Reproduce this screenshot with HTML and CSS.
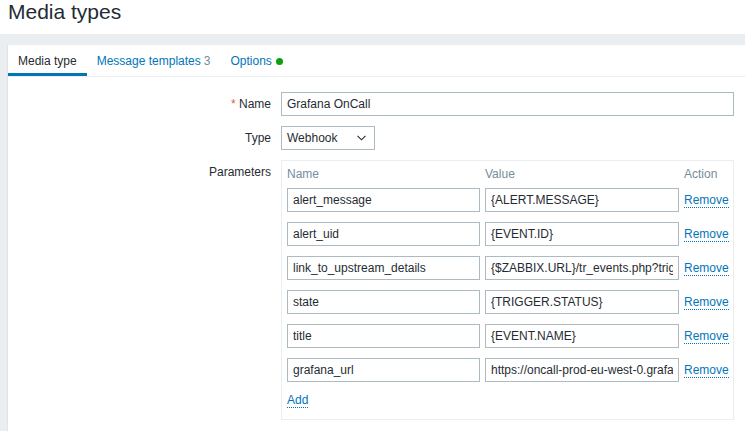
FILE: index.html
```html
<!DOCTYPE html>
<html>
<head>
<meta charset="utf-8">
<title>Media types</title>
<link rel="stylesheet" href="styles.css">
</head>
<body>
<header class="page-header">
  <h1 class="page-title">Media types</h1>
</header>
<main class="content">
  <section class="panel">
    <nav class="tabs">
      <a class="tab tab-active">Media type</a>
      <a class="tab">Message templates<span class="tab-count">3</span></a>
      <a class="tab">Options<span class="tab-dot"></span></a>
    </nav>
    <form class="form">
      <label class="form-label"><span class="req">*</span> Name</label>
      <div class="form-field"><input class="text-input input-wide" type="text" value="Grafana OnCall"></div>

      <label class="form-label">Type</label>
      <div class="form-field">
        <div class="select">
          <span>Webhook</span>
          <svg class="chevron" width="9" height="6" viewBox="0 0 9 6"><path d="M0.5 0.8 L4.5 4.8 L8.5 0.8" fill="none" stroke="#1f2c33" stroke-width="1.1"/></svg>
        </div>
      </div>

      <label class="form-label">Parameters</label>
      <div class="form-field">
        <div class="params">
          <div class="params-grid">
            <div class="th">Name</div>
            <div class="th">Value</div>
            <div class="th">Action</div>

            <input class="text-input" type="text" value="alert_message">
            <input class="text-input" type="text" value="{ALERT.MESSAGE}">
            <div class="action"><a class="link">Remove</a></div>

            <input class="text-input" type="text" value="alert_uid">
            <input class="text-input" type="text" value="{EVENT.ID}">
            <div class="action"><a class="link">Remove</a></div>

            <input class="text-input" type="text" value="link_to_upstream_details">
            <input class="text-input" type="text" value="{$ZABBIX.URL}/tr_events.php?triggerid={TRIGGER.ID}&amp;eventid={EVENT.ID}">
            <div class="action"><a class="link">Remove</a></div>

            <input class="text-input" type="text" value="state">
            <input class="text-input" type="text" value="{TRIGGER.STATUS}">
            <div class="action"><a class="link">Remove</a></div>

            <input class="text-input" type="text" value="title">
            <input class="text-input" type="text" value="{EVENT.NAME}">
            <div class="action"><a class="link">Remove</a></div>

            <input class="text-input" type="text" value="grafana_url">
            <input class="text-input" type="text" value="https://oncall-prod-eu-west-0.grafana.net/oncall/integrations/v1/zabbix/">
            <div class="action"><a class="link">Remove</a></div>
          </div>
          <div class="add-row"><a class="link">Add</a></div>
        </div>
      </div>
    </form>
  </section>
</main>
</body>
</html>
```

FILE: styles.css
```css
html, body {
  margin: 0;
  padding: 0;
}
body {
  background: #ebeef0;
  font-family: "Liberation Sans", Arial, sans-serif;
  font-size: 12px;
  line-height: 14px;
  color: #1f2c33;
  overflow: hidden;
  height: 431px;
}
.page-header {
  background: #ffffff;
  height: 34px;
  padding: 0 8px;
  box-sizing: border-box;
}
.page-title {
  margin: 0;
  font-size: 21px;
  line-height: 24px;
  font-weight: normal;
  color: #1f2c33;
}
.content {
  padding: 11px 0 0 8px;
}
.panel {
  background: #ffffff;
  width: 760px;
  height: 400px;
  border-left: 1px solid #dfe4e7;
  margin-left: -1px;
}
.tabs {
  display: flex;
  height: 31px;
  border-bottom: 1px solid #ebeef0;
}
.tab {
  display: block;
  padding: 9px 10px 5px;
  line-height: 14px;
  color: #0275b8;
  border-bottom: 3px solid transparent;
}
.tab-active {
  color: #1f2c33;
  border-bottom-color: #0275b8;
}
.tab-count {
  color: #768d99;
  margin-left: 3px;
}
.tab-dot {
  display: inline-block;
  width: 7px;
  height: 7px;
  border-radius: 50%;
  background: #0aa10a;
  margin-left: 4px;
  vertical-align: 0px;
}
.form {
  display: grid;
  grid-template-columns: 263px auto;
  column-gap: 10px;
  row-gap: 10px;
  padding-top: 15px;
}
.form-label {
  text-align: right;
  padding-top: 5px;
  line-height: 14px;
}
.req {
  color: #e45959;
}
.form-field {
  display: flex;
  align-items: flex-start;
}
.text-input {
  box-sizing: border-box;
  height: 24px;
  border: 1px solid #acbbc2;
  padding: 0 5px;
  margin: 0;
  font-family: "Liberation Sans", Arial, sans-serif;
  font-size: 12px;
  color: #1f2c33;
  background: #ffffff;
  outline: none;
  min-width: 0;
  width: 100%;
}
.input-wide {
  width: 453px;
}
.select {
  box-sizing: border-box;
  width: 94px;
  height: 24px;
  border: 1px solid #acbbc2;
  padding: 0 5px;
  display: flex;
  align-items: center;
  justify-content: space-between;
}
.chevron {
  margin-right: 3px;
}
.params {
  box-sizing: border-box;
  width: 453px;
  border: 1px solid #ebeef0;
  padding: 6px 5px 12px 5px;
}
.params-grid {
  display: grid;
  grid-template-columns: 193px 194px auto;
  column-gap: 5px;
  row-gap: 10px;
}
.th {
  color: #768d99;
  line-height: 14px;
  margin-bottom: -3px;
}
.action {
  display: flex;
  align-items: center;
}
.link {
  color: #0275b8;
  border-bottom: 1px dotted #0275b8;
  cursor: pointer;
}
.add-row {
  margin-top: 11px;
  line-height: 14px;
}
```
